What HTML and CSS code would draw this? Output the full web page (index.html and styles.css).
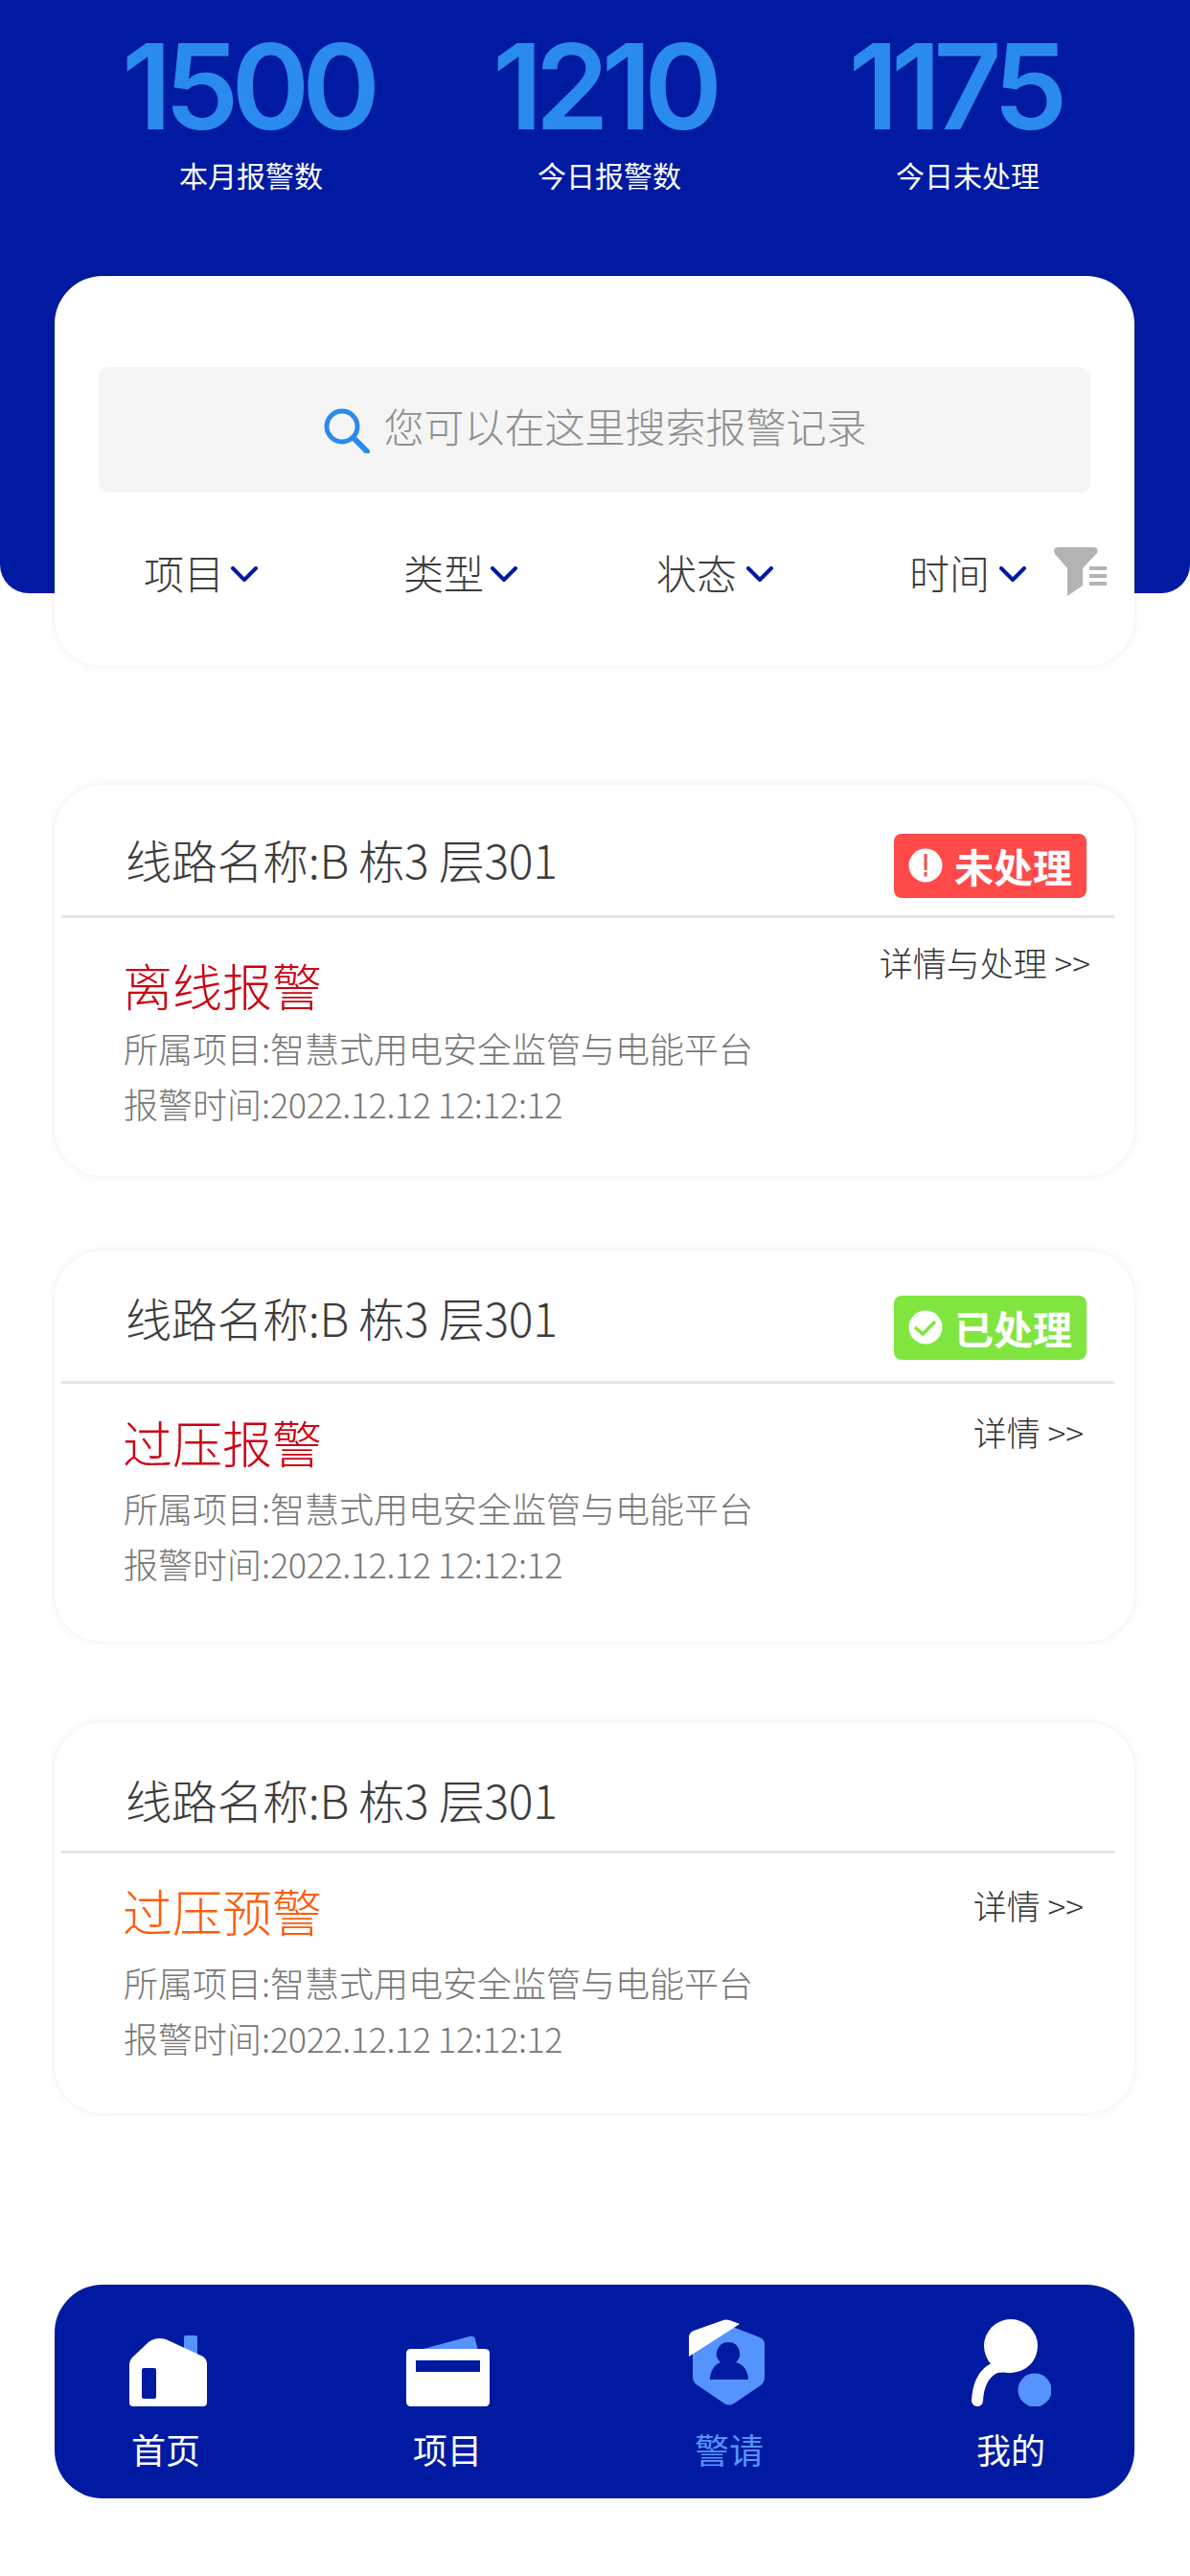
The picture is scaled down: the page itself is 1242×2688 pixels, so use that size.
FILE: index.html
```html
<!DOCTYPE html>
<html lang="zh-CN">
<head>
    <meta charset="UTF-8">
    <title>警情</title>
    <link rel="stylesheet" href="styles.css">
</head>
<body>
    <header class="top">
        <div class="stat"><div class="stat-num">1500</div><div class="stat-label">本月报警数</div></div>
        <div class="stat"><div class="stat-num">1210</div><div class="stat-label">今日报警数</div></div>
        <div class="stat"><div class="stat-num">1175</div><div class="stat-label">今日未处理</div></div>
    </header>

    <section class="search-card">
        <div class="search">
            <svg class="search-icon" viewBox="0 0 48 48"><circle cx="19" cy="20" r="16" fill="none" stroke="#2a8aee" stroke-width="5"/><path d="M31 32L45 46" fill="none" stroke="#2a8aee" stroke-width="6" stroke-linecap="round"/></svg>
            <span>您可以在这里搜索报警记录</span>
        </div>
        <div class="filters">
            <div class="filter">项目<svg class="chev" viewBox="0 0 28 17"><path d="M2 2L14 14L26 2" fill="none" stroke="#001aa1" stroke-width="4" stroke-linecap="round" stroke-linejoin="round"/></svg></div>
            <div class="filter">类型<svg class="chev" viewBox="0 0 28 17"><path d="M2 2L14 14L26 2" fill="none" stroke="#001aa1" stroke-width="4" stroke-linecap="round" stroke-linejoin="round"/></svg></div>
            <div class="filter">状态<svg class="chev" viewBox="0 0 28 17"><path d="M2 2L14 14L26 2" fill="none" stroke="#001aa1" stroke-width="4" stroke-linecap="round" stroke-linejoin="round"/></svg></div>
            <div class="filter">时间<svg class="chev" viewBox="0 0 28 17"><path d="M2 2L14 14L26 2" fill="none" stroke="#001aa1" stroke-width="4" stroke-linecap="round" stroke-linejoin="round"/></svg></div>
            <svg class="funnel" viewBox="0 0 55 51"><path d="M4 0H42Q47 1 45 6L30 22V40L14 51V22L1 7Q-2 1 4 0Z" fill="#b3b3b3"/><path d="M37 20H55V24H37ZM37 28H55V32H37ZM37 36H55V40H37Z" fill="#b3b3b3"/></svg>
        </div>
    </section>

    <section class="alarm alarm-first">
        <div class="alarm-head">
            <span class="line-name">线路名称:B 栋3 层301</span>
            <span class="badge badge-red">
                <svg viewBox="0 0 36 36"><circle cx="18" cy="18" r="17.5" fill="#fff"/><rect x="16.5" y="6" width="3" height="17" fill="#ff4a4a"/><rect x="16.5" y="25" width="3" height="4.5" fill="#ff4a4a"/></svg>
                未处理
            </span>
        </div>
        <div class="line"></div>
        <div class="alarm-body">
            <div>
                <div class="alarm-type red">离线报警</div>
                <div class="info">所属项目:智慧式用电安全监管与电能平台</div>
                <div class="info">报警时间:<span class="time">2022.12.12 12:12:12</span></div>
            </div>
            <a class="more">详情与处理 &gt;&gt;</a>
        </div>
    </section>

    <section class="alarm alarm-second">
        <div class="alarm-head">
            <span class="line-name">线路名称:B 栋3 层301</span>
            <span class="badge badge-green">
                <svg viewBox="0 0 36 36"><circle cx="18" cy="18" r="17.5" fill="#fff"/><path d="M7 18L15 25L28 12" fill="none" stroke="#80e53e" stroke-width="3.5"/></svg>
                已处理
            </span>
        </div>
        <div class="line"></div>
        <div class="alarm-body">
            <div>
                <div class="alarm-type red">过压报警</div>
                <div class="info">所属项目:智慧式用电安全监管与电能平台</div>
                <div class="info">报警时间:<span class="time">2022.12.12 12:12:12</span></div>
            </div>
            <a class="more">详情 &gt;&gt;</a>
        </div>
    </section>

    <section class="alarm alarm-third">
        <div class="alarm-head">
            <span class="line-name">线路名称:B 栋3 层301</span>
        </div>
        <div class="line"></div>
        <div class="alarm-body">
            <div>
                <div class="alarm-type orange">过压预警</div>
                <div class="info">所属项目:智慧式用电安全监管与电能平台</div>
                <div class="info">报警时间:<span class="time">2022.12.12 12:12:12</span></div>
            </div>
            <a class="more">详情 &gt;&gt;</a>
        </div>
    </section>

    <nav class="tabbar">
        <div class="tab">
            <svg class="tab-home" viewBox="0 0 82 74"><rect x="57" y="0" width="14" height="28" rx="2" fill="#5593ff"/><path fill-rule="evenodd" fill="#fff" d="M0 30Q0 26 3 23L20 7Q28 1 38 4L77 22Q81 25 81 30V70Q81 74 77 74H4Q0 74 0 70ZM15 34Q13 34 13 36V64Q13 66 15 66H26Q28 66 28 64V36Q28 34 26 34Z"/></svg>
            <span>首页</span>
        </div>
        <div class="tab">
            <svg class="tab-wallet" viewBox="0 0 87 74"><path d="M18 14L66 1Q71 0 72 4L75 16Z" fill="#5593ff"/><path fill-rule="evenodd" fill="#fff" d="M5 14H82Q87 14 87 19V69Q87 74 82 74H5Q0 74 0 69V19Q0 14 5 14ZM10 26V38H77V26Z"/></svg>
            <span>项目</span>
        </div>
        <div class="tab active">
            <svg class="tab-shield" viewBox="0 0 79 91"><path fill="#5593ff" fill-rule="evenodd" d="M43 7L74 19Q79 21 79 26V60Q79 66 75 69L47 88Q42 91 37 88L9 69Q4 66 4 60V24ZM41 24A12 12 0 0 0 33 45C27 47 22 54 22 63H62C62 54 57 47 49 45A12 12 0 0 0 41 24Z"/><path fill="#fff" d="M0 39V19Q0 14 5 12L36 1Q39 0 42 1L53 5Z"/></svg>
            <span>警请</span>
        </div>
        <div class="tab">
            <svg class="tab-person" viewBox="0 0 83 91"><circle cx="41" cy="28" r="28" fill="#fff"/><path d="M6 85C7 66 14 55 26 50Q32 49 40 50" fill="none" stroke="#fff" stroke-width="12" stroke-linecap="round"/><circle cx="66" cy="74" r="17.5" fill="#5593ff"/></svg>
            <span>我的</span>
        </div>
    </nav>
</body>
</html>
```

FILE: styles.css
```css
* {
    box-sizing: border-box;
}
body {
    margin: 0;
    background: #fff;
    font-family: "Noto Sans CJK SC", "Noto Sans", sans-serif;
    font-weight: 300;
    color: #3c3c3c;
}
.top {
    height: 619px;
    padding: 26px 0 0 75px;
    display: grid;
    grid-template-columns: repeat(3, 374px);
    align-content: start;
    background: #001aa1;
    border-radius: 0 0 30px 30px;
}
.stat {
    text-align: center;
}
.stat-num {
    height: 128px;
    margin-right: 8px;
    line-height: 128px;
    font-family: Inter, sans-serif;
    font-size: 124px;
    font-weight: 600;
    letter-spacing: -8px;
    color: #2a8aee;
}
.stat:nth-child(2) .stat-num {
    margin-right: 12px;
}
.stat:nth-child(3) .stat-num {
    margin-right: 28px;
}
.stat-label {
    margin-top: 8px;
    line-height: 40px;
    font-size: 30px;
    font-weight: 400;
    color: #fff;
}
.search-card {
    width: 1127px;
    height: 407px;
    margin: -331px 0 0 57px;
    padding: 95px 46px 0;
    background: #fff;
    border-radius: 50px;
    box-shadow: 0 0 8px rgba(0, 0, 0, 0.08);
    position: relative;
}
.search {
    height: 131px;
    display: flex;
    align-items: center;
    justify-content: center;
    gap: 14px;
    padding-left: 2px;
    background: #f5f5f5;
    border-radius: 10px;
    font-size: 42px;
    color: #8f8f8f;
}
.search span {
    margin-bottom: 10px;
}
.search-icon {
    width: 48px;
    height: 48px;
}
.filters {
    display: flex;
    align-items: center;
    height: 60px;
    margin-top: 53px;
    padding-left: 47px;
}
.filter {
    width: 120px;
    margin-right: 145px;
    display: flex;
    align-items: center;
    gap: 7px;
    line-height: 60px;
    font-size: 42px;
    white-space: nowrap;
}
.filter:first-child {
    margin-right: 152px;
}
.filter:nth-child(3),
.filter:nth-child(4) {
    gap: 10px;
}
.filter:nth-child(3) {
    margin-right: 144px;
}
.filter:nth-child(4) {
    margin-right: 31px;
}
.chev {
    width: 28px;
    height: 17px;
    flex: none;
    margin-top: 5px;
}
.funnel {
    width: 55px;
    height: 51px;
    flex: none;
    margin-top: -2px;
}
.alarm {
    width: 1127px;
    height: 408px;
    margin-left: 57px;
    background: #fff;
    border-radius: 50px;
    box-shadow: 0 0 8px rgba(0, 0, 0, 0.08);
}
.alarm-first {
    margin-top: 124px;
}
.alarm-second {
    margin-top: 78px;
}
.alarm-third {
    margin-top: 84px;
}
.alarm-head {
    display: flex;
    align-items: center;
    justify-content: space-between;
    height: 136px;
    padding: 0 50px 0 74px;
}
.alarm-first .alarm-head {
    padding-top: 18px;
}
.alarm-first .badge {
    margin-top: 14px;
}
.alarm-second .alarm-head {
    padding-top: 2px;
}
.alarm-second .badge {
    margin-top: 22px;
}
.alarm-third .alarm-head {
    height: 134px;
    padding-top: 25px;
}
.line-name {
    font-size: 48px;
    letter-spacing: -0.3px;
    white-space: nowrap;
}
.badge {
    width: 201px;
    height: 67px;
    display: flex;
    align-items: center;
    gap: 12px;
    padding-left: 15px;
    border-radius: 8px;
    font-size: 41px;
    font-weight: 700;
    color: #fff;
}
.badge svg {
    width: 36px;
    height: 36px;
    flex: none;
}
.badge-red {
    background: #ff4a4a;
}
.badge-green {
    background: #80e53e;
}
.line {
    height: 3px;
    margin: 0 21px 0 7px;
    background: #e5e5e5;
}
.alarm-body {
    display: flex;
    justify-content: space-between;
    align-items: flex-start;
    padding: 34px 46px 0 72px;
}
.alarm-first .more {
    margin-top: -10px;
}
.alarm-second .alarm-body {
    padding: 28px 53px 0 72px;
}
.alarm-second .alarm-type {
    margin-top: -3px;
    margin-bottom: 3px;
}
.alarm-third .alarm-body {
    padding: 24px 53px 0 72px;
}
.alarm-third .more {
    margin-top: 8px;
}
.alarm-type {
    margin-left: -1px;
    line-height: 72px;
    font-size: 52px;
}
.alarm-third .alarm-type {
    margin-bottom: 9px;
}
.red {
    color: #cc0011;
}
.orange {
    color: #ff5a0a;
}
.info {
    line-height: 58px;
    font-size: 36px;
    color: #777;
}
.time {
    letter-spacing: -0.45px;
}
.more {
    line-height: 44px;
    font-size: 35px;
    color: #333;
    white-space: nowrap;
}
.tabbar {
    width: 1127px;
    height: 223px;
    margin: 179px 0 0 57px;
    padding: 32px 0 0 71px;
    display: flex;
    gap: 204px;
    background: #001aa1;
    border-radius: 50px;
}
.tab {
    width: 90px;
    display: flex;
    flex-direction: column;
    align-items: center;
    justify-content: flex-end;
    height: 164px;
    font-size: 36px;
    line-height: 50px;
    font-weight: 400;
    color: #fff;
    white-space: nowrap;
}
.tab span {
    margin-top: 19px;
}
.tab.active {
    color: #5593ff;
}
.tab-home {
    width: 82px;
    height: 74px;
    flex: none;
    margin-left: 6px;
}
.tab-wallet {
    width: 87px;
    height: 74px;
    flex: none;
}
.tab-shield {
    width: 79px;
    height: 91px;
    flex: none;
    margin-left: -6px;
}
.tab-person {
    width: 83px;
    height: 91px;
    flex: none;
}
```
